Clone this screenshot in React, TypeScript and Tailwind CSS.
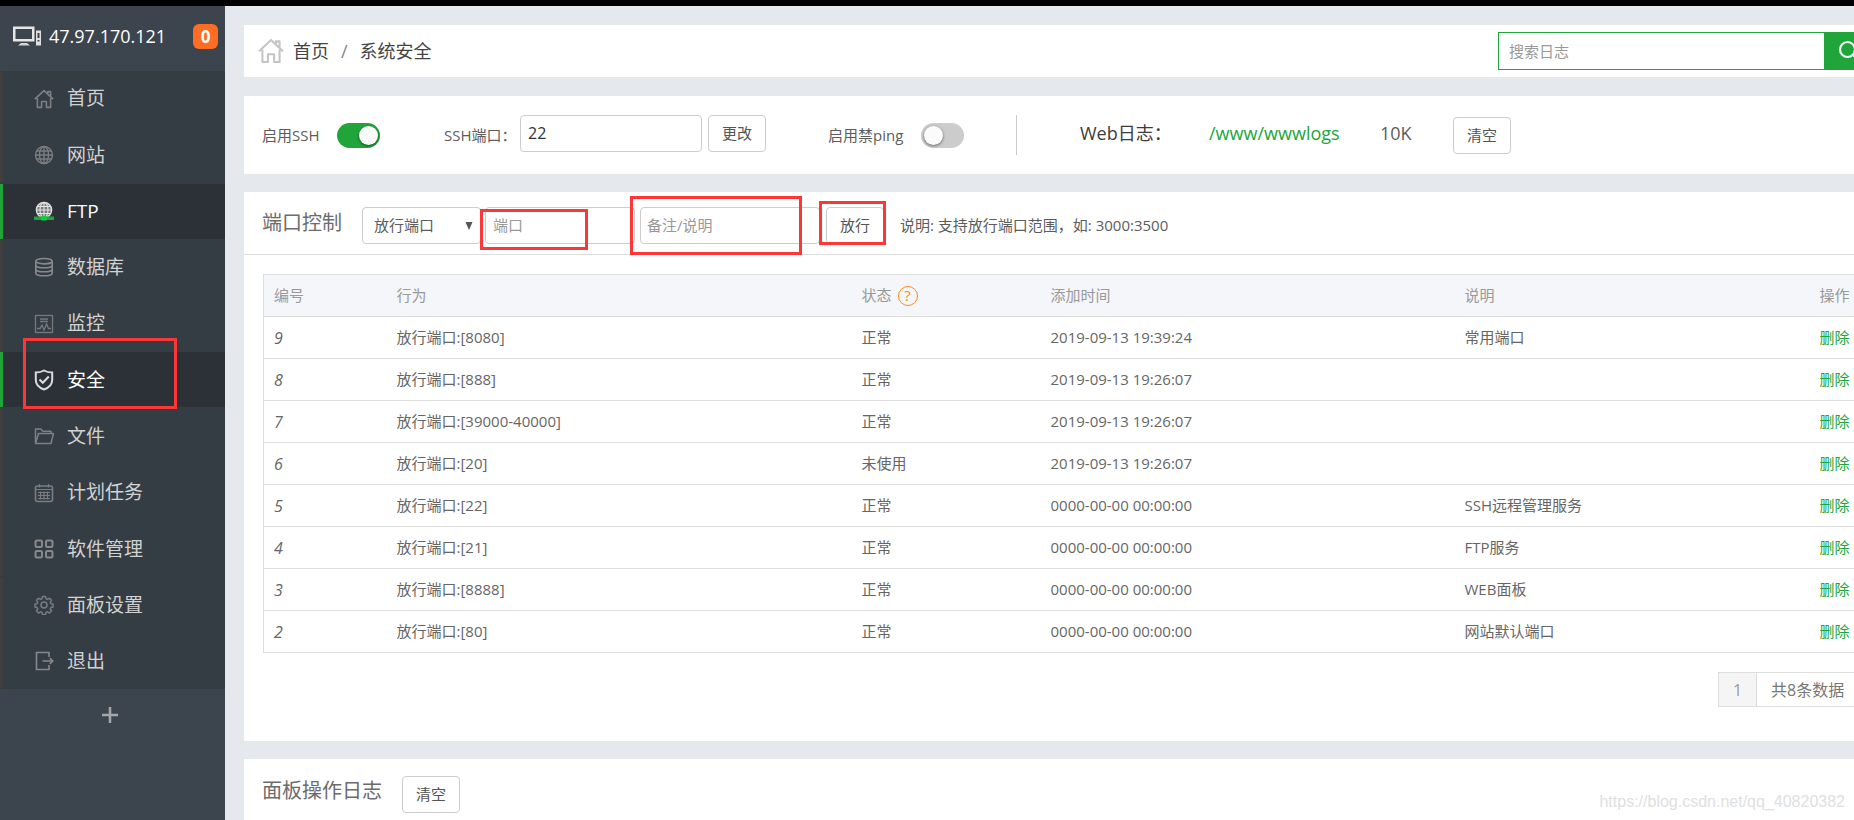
import React from 'react';

const RED = 'pointer-events-none absolute z-10 border-[3px] border-[#fc3737]';

function HouseIcon({ className, stroke }: { className: string; stroke: string }) {
  return (
    <svg viewBox="0 0 20 20" className={className} fill="none" stroke={stroke} strokeWidth="1.6" strokeLinejoin="round" aria-hidden="true">
      <path d="M.8 10.200 10 1.600 19.200 10.200M3.400 9V18.400H7.600V12.500H12.400V18.400H16.600V9M13.800 4.500V2.600H16.600V7.600" />
    </svg>
  );
}

const g = '#87898b';

const icons: Record<string, React.ReactNode> = {
  home: <HouseIcon className="size-5" stroke="#7d7f80" />,
  globe: (
    <svg viewBox="0 0 20 20" className="size-5" fill="none" stroke="#7b7e80" strokeWidth="1.4" aria-hidden="true">
      <circle cx="10" cy="10" r="8.5" />
      <ellipse cx="10" cy="10" rx="4.5" ry="8.5" />
      <path d="M10 1.5v17M1.5 10h17M2.8 6h14.4M2.8 14h14.4" />
    </svg>
  ),
  ftp: (
    <svg viewBox="0 0 20 20" className="size-5" fill="none" aria-hidden="true">
      <circle cx="10" cy="9" r="7.600" fill="#77797c" stroke="#d8d8d8" strokeWidth="1.500" />
      <path d="M10 1.500v15M2 9h16M3.500 5.500h13M3.500 12.500h13" stroke="#e4e4e4" strokeWidth="1.100" />
      <ellipse cx="10" cy="9" rx="4" ry="7.600" stroke="#e4e4e4" strokeWidth="1.100" />
      <rect y="15.500" width="20" height="3.500" fill="#20a53a" />
      <rect x="7" y="15" width="6" height="4.500" rx="1" fill="#0cd03a" />
    </svg>
  ),
  db: (
    <svg viewBox="0 0 20 20" className="size-5" fill="none" stroke={g} strokeWidth="1.600" aria-hidden="true">
      <ellipse cx="10" cy="4.200" rx="8.200" ry="2.700" />
      <path d="M1.800 4.200v12c0 1.500 3.700 2.600 8.200 2.600s8.200-1.100 8.200-2.600v-12M1.800 8.200c0 1.500 3.700 2.600 8.200 2.600s8.200-1.100 8.200-2.600M1.800 12.200c0 1.500 3.700 2.600 8.200 2.600s8.200-1.100 8.200-2.600" />
    </svg>
  ),
  monitor: (
    <svg viewBox="0 0 20 20" className="size-5" fill="none" stroke="#75797b" strokeWidth="1.300" aria-hidden="true">
      <rect x="1.500" y="1.500" width="17" height="17" />
      <path d="M6 5h8M6 7.500h8M3 14.500h3l2-3.500 2 5 2.500-6 2 4.500h2.500" />
    </svg>
  ),
  shield: (
    <svg viewBox="0 0 20 22" className="h-[22px] w-5" fill="none" stroke="#dcdcdc" strokeWidth="2" aria-hidden="true">
      <path d="M10 1.500C7.500 3 4.500 3.500 1.800 3.500V11c0 4.500 3.500 7.700 8.200 9.500 4.700-1.800 8.200-5 8.200-9.500V3.500c-2.700 0-5.700-.5-8.200-2Z" />
      <path d="m5.500 10.500 3.300 3.300 6-6.300" />
    </svg>
  ),
  folder: (
    <svg viewBox="0 0 20 20" className="size-5" fill="none" stroke="#7d8183" strokeWidth="1.500" strokeLinejoin="round" aria-hidden="true">
      <path d="M1.500 17.500V3h5.500l1.500 2.200h8.500V7.500M1.500 17.500 4.500 7.500h15l-2.500 10z" />
    </svg>
  ),
  calendar: (
    <svg viewBox="0 0 20 20" className="size-5" fill="none" stroke="#7a7e80" strokeWidth="1.200" aria-hidden="true">
      <rect x="1.500" y="3" width="17" height="15.500" rx="2" strokeWidth="1.600" />
      <path d="M1.500 6.500h17M5.500 1v3.500M14.500 1v3.500M4 9.500h12M4 12.500h12M4 15.500h12M6.500 8.500v8M10 8.500v8M13.500 8.500v8" />
    </svg>
  ),
  grid: (
    <svg viewBox="0 0 20 20" className="size-5" fill="none" stroke={g} strokeWidth="2" aria-hidden="true">
      <rect x="1.500" y="1.500" width="6.500" height="6.500" rx="1.500" />
      <rect x="12" y="1.500" width="6.500" height="6.500" rx="1.500" />
      <rect x="1.500" y="12" width="6.500" height="6.500" rx="1.500" />
      <rect x="12" y="12" width="6.500" height="6.500" rx="1.500" />
    </svg>
  ),
  gear: (
    <svg viewBox="0 0 20 20" className="size-5" fill="none" stroke="#787c7e" strokeWidth="1.500" strokeLinejoin="round" aria-hidden="true">
      <path d="M8.500 1.500h3l.5 2.200 1.500.7 2-1.200 2 2-1.200 2 .7 1.500 2 .3v3l-2 .5-.7 1.500 1.200 2-2 2-2-1.200-1.500.7-.5 2h-3l-.5-2-1.500-.7-2 1.200-2-2 1.200-2-.7-1.500-2-.5v-3l2-.3.7-1.500-1.200-2 2-2 2 1.200 1.500-.7z" />
      <circle cx="10" cy="10" r="3" />
    </svg>
  ),
  exit: (
    <svg viewBox="0 0 20 20" className="size-5" fill="none" stroke="#85898b" strokeWidth="1.600" aria-hidden="true">
      <path d="M15 6V1.500H2.500v17H15V14M8.500 10H19M15.800 7.200l3 2.800-3 2.800" />
    </svg>
  ),
};

const menu = [
  { icon: 'home', label: '首页' },
  { icon: 'globe', label: '网站' },
  { icon: 'ftp', label: 'FTP', active: true },
  { icon: 'db', label: '数据库' },
  { icon: 'monitor', label: '监控' },
  { icon: 'shield', label: '安全', active: true, marked: true },
  { icon: 'folder', label: '文件' },
  { icon: 'calendar', label: '计划任务' },
  { icon: 'grid', label: '软件管理' },
  { icon: 'gear', label: '面板设置' },
  { icon: 'exit', label: '退出' },
];

const rows = [
  ['9', '[8080]', '正常', '2019-09-13 19:39:24', '常用端口'],
  ['8', '[888]', '正常', '2019-09-13 19:26:07', ''],
  ['7', '[39000-40000]', '正常', '2019-09-13 19:26:07', ''],
  ['6', '[20]', '未使用', '2019-09-13 19:26:07', ''],
  ['5', '[22]', '正常', '0000-00-00 00:00:00', 'SSH远程管理服务'],
  ['4', '[21]', '正常', '0000-00-00 00:00:00', 'FTP服务'],
  ['3', '[8888]', '正常', '0000-00-00 00:00:00', 'WEB面板'],
  ['2', '[80]', '正常', '0000-00-00 00:00:00', '网站默认端口'],
];

function Btn({ children }: { children: React.ReactNode }) {
  return (
    <button type="button" className="h-[37px] w-[58px] shrink-0 rounded-[4px] border border-[#ccc] bg-white text-[15px] text-[#555]">
      {children}
    </button>
  );
}

function Toggle({ id, on }: { id: string; on?: boolean }) {
  return (
    <span className="relative inline-flex h-[25px] w-[43px] shrink-0">
      <input
        id={id}
        type="checkbox"
        role="switch"
        defaultChecked={on}
        className="peer h-full w-full cursor-pointer appearance-none rounded-full bg-[#ccc] checked:bg-[#20a53a]"
      />
      <span className="pointer-events-none absolute top-[3px] left-[3px] size-[19px] rounded-full bg-[#fbfbfb] shadow-[0_1px_3px_rgba(0,0,0,0.5)] peer-checked:left-[22px]" />
    </span>
  );
}

function Sidebar() {
  return (
    <aside className="flex w-[225px] shrink-0 flex-col bg-[#3c444d]">
      <header className="flex h-[65px] items-start justify-between pt-[18px] pr-[7px] pl-[13px]">
        <div className="flex items-center gap-2">
          <svg viewBox="0 0 28 20" className="h-5 w-7" aria-hidden="true">
            <path d="M0 .5h21.500v15H0zM2.500 3v10H19V3z" fill="#e6e6e6" fillRule="evenodd" />
            <path d="M8 17h6l3 2.500H5z" fill="#d5d5d5" />
            <path d="M23 4.500h5V19.500h-5zM24.500 7v5h2V7zM24.500 14v1.500h2V14z" fill="#e0e0e0" fillRule="evenodd" />
          </svg>
          <span className="text-[18px] leading-6 text-white">47.97.170.121</span>
        </div>
        <span className="flex size-[25px] items-center justify-center rounded-[6px] bg-[#ff6c22] text-[17px] font-bold text-white">0</span>
      </header>
      <nav className="flex h-[618px] flex-col justify-between bg-[#353d44]">
        {menu.map((m) => (
          <a
            key={m.label}
            href="#"
            className={
              m.active
                ? 'relative flex h-[55px] items-center gap-[13px] border-l-[3px] border-[#20a53a] bg-[#2c3138] pl-[31px] text-[19px] text-white'
                : 'relative flex h-[55px] items-center gap-[13px] border-l-[3px] border-[#403f3e] bg-[#353d44] pl-[31px] text-[19px] text-[#d2d2d2]'
            }
          >
            {icons[m.icon]}
            <span>{m.label}</span>
            {m.marked && <span className={RED + ' -top-[14px] left-5 h-[71px] w-[154px]'} />}
          </a>
        ))}
      </nav>
      <button type="button" aria-label="添加" className="mt-4 ml-[100px] flex size-5 items-center justify-center">
        <svg viewBox="0 0 18 18" className="size-[18px]" stroke="#a4a7ab" strokeWidth="2.500" aria-hidden="true">
          <path d="M9 1v16M1 9h16" />
        </svg>
      </button>
    </aside>
  );
}

export default function App() {
  return (
    <div className="relative flex min-h-screen flex-col overflow-hidden bg-[#e5e8ed] font-['Open_Sans','Noto_Sans_CJK_SC',sans-serif] text-[15px] text-[#5c5c5c]">
      <div className="h-[6px] bg-black" />
      <div className="flex flex-1">
        <Sidebar />
        <main className="-mr-5 flex min-w-0 flex-1 flex-col pt-[19px] pl-[19px]">
          <div className="flex h-[52px] items-center justify-between bg-white pl-[14px]">
            <div className="flex items-center text-[18px] text-[#444]">
              <HouseIcon className="mr-[9px] size-[26px]" stroke="#c4c4c4" />
              <a href="#">首页</a>
              <span className="mx-3 text-[#888]">/</span>
              <span>系统安全</span>
            </div>
            <form className="flex h-[38px]" onSubmit={(e) => e.preventDefault()}>
              <input
                type="text"
                aria-label="搜索日志"
                placeholder="搜索日志"
                className="w-[327px] border border-[#20a53a] px-[10px] outline-none placeholder:text-[#999]"
              />
              <button type="submit" aria-label="搜索" className="flex w-[49px] items-center bg-[#20a53a] pl-[13px]">
                <svg viewBox="0 0 22 22" className="size-[22px]" fill="none" stroke="#f2fff4" strokeWidth="2.200" aria-hidden="true">
                  <circle cx="9.500" cy="9.500" r="7.500" />
                  <path d="m15 15 6 6" />
                </svg>
              </button>
            </form>
          </div>

          <section className="mt-[19px] flex h-[78px] items-center bg-white pl-[18px]">
            <div className="flex w-[182px] items-center gap-[17px]">
              <label htmlFor="ssh">启用SSH</label>
              <Toggle id="ssh" on />
            </div>
            <div className="flex w-96 items-center pb-1">
              <label htmlFor="port" className="w-[76px] pt-1">SSH端口：</label>
              <input id="port" defaultValue="22" className="h-[37px] w-[182px] rounded-[4px] border border-[#ccc] px-[7px] text-[16px] text-[#333] outline-none" />
              <div className="ml-[6px]"><Btn>更改</Btn></div>
            </div>
            <div className="flex w-[188px] items-center gap-[18px]">
              <label htmlFor="ping">启用禁ping</label>
              <Toggle id="ping" />
            </div>
            <div className="flex items-center border-l border-[#ccc] text-[18px]">
              <span className="flex h-10 w-[192px] items-center pb-1 pl-[63px] text-[#3c3c3c]">Web日志：</span>
              <a href="#" className="w-[171px] pb-1 text-[#20a53a]">/www/wwwlogs</a>
              <span className="w-[73px] pb-1">10K</span>
              <Btn>清空</Btn>
            </div>
          </section>

          <section className="mt-[18px] h-[549px] bg-white">
            <form className="relative flex h-[63px] items-center border-b border-[#ddd] pt-[4px] pl-[18px]" onSubmit={(e) => e.preventDefault()}>
              <h2 className="w-[100px] pb-1 text-[20px] text-[#6c6c6c]">端口控制</h2>
              <div className="relative">
                <select aria-label="放行端口" className="h-[37px] w-[119px] appearance-none rounded-[4px] border border-[#ccc] bg-white pl-[11px] outline-none">
                  <option>放行端口</option>
                  <option>屏蔽IP</option>
                </select>
                <svg viewBox="0 0 8 8" className="pointer-events-none absolute top-[15px] right-2 size-2" fill="#555" aria-hidden="true">
                  <path d="M.5 0h7L4 8z" />
                </svg>
              </div>
              <input aria-label="端口" placeholder="端口" className="ml-1 h-[37px] w-[150px] rounded-[4px] border border-[#ccc] px-[7px] outline-none placeholder:text-[#999]" />
              <input aria-label="备注/说明" placeholder="备注/说明" className="mr-[6px] ml-[5px] h-[37px] w-[180px] rounded-[4px] border border-[#ccc] px-[6px] outline-none placeholder:text-[#999]" />
              <Btn>放行</Btn>
              <span className="ml-4">说明: 支持放行端口范围，如: 3000:3500</span>
              <span className={RED + ' top-[17px] left-[236px] h-[41px] w-[108px]'} />
              <span className={RED + ' top-1 left-[386px] h-[59px] w-[172px]'} />
              <span className={RED + ' top-[9px] left-[575px] h-11 w-[67px]'} />
            </form>

            <div className="pt-[19px] pr-[10px] pl-[19px]">
              <table className="w-full table-fixed border-collapse border border-[#ddd] text-left text-[#666]">
                <thead className="bg-[#f4f6fa] text-[#999]">
                  <tr className="h-[42px] [&>th]:px-[10px] [&>th]:font-normal">
                    <th className="w-[123px]">编号</th>
                    <th className="w-[465px]">行为</th>
                    <th className="w-[189px]">
                      <span className="flex items-center gap-[6px]">
                        状态
                        <a href="#" className="flex size-5 items-center justify-center rounded-full border border-[#ff8a1c] text-[15px] leading-none text-[#ff8a1c]">?</a>
                      </span>
                    </th>
                    <th className="w-[414px]">添加时间</th>
                    <th>说明</th>
                    <th className="w-[54px]">操作</th>
                  </tr>
                </thead>
                <tbody>
                  {rows.map(([id, port, state, time, note]) => (
                    <tr key={id} className="h-[42px] border-t border-[#ddd] [&>td]:px-[10px]">
                      <td className="text-[16px] italic">{id}</td>
                      <td>放行端口:{port}</td>
                      <td>{state}</td>
                      <td>{time}</td>
                      <td>{note}</td>
                      <td><a href="#" className="text-[#20a53a]">删除</a></td>
                    </tr>
                  ))}
                </tbody>
              </table>
              <div className="mt-[19px] flex justify-end text-[16px]">
                <div className="flex h-[35px] border border-[#ddd]">
                  <span className="flex w-[38px] items-center justify-center border-r border-[#ddd] bg-[#f5f5f5] text-[#999]">1</span>
                  <span className="flex w-[106px] items-center pl-[14px] text-[#777]">共8条数据</span>
                </div>
              </div>
            </div>
          </section>

          <section className="mt-[18px] flex flex-1 items-start bg-white pl-[18px]">
            <h2 className="mt-4 mr-5 text-[20px] leading-8 text-[#6c6c6c]">面板操作日志</h2>
            <div className="mt-[17px]"><Btn>清空</Btn></div>
          </section>
        </main>
      </div>
      <span className="pointer-events-none absolute right-[9px] bottom-[6px] font-['Liberation_Sans',sans-serif] text-[16px] leading-6 text-[#e0e0e0]">
        https://blog.csdn.net/qq_40820382
      </span>
    </div>
  );
}
